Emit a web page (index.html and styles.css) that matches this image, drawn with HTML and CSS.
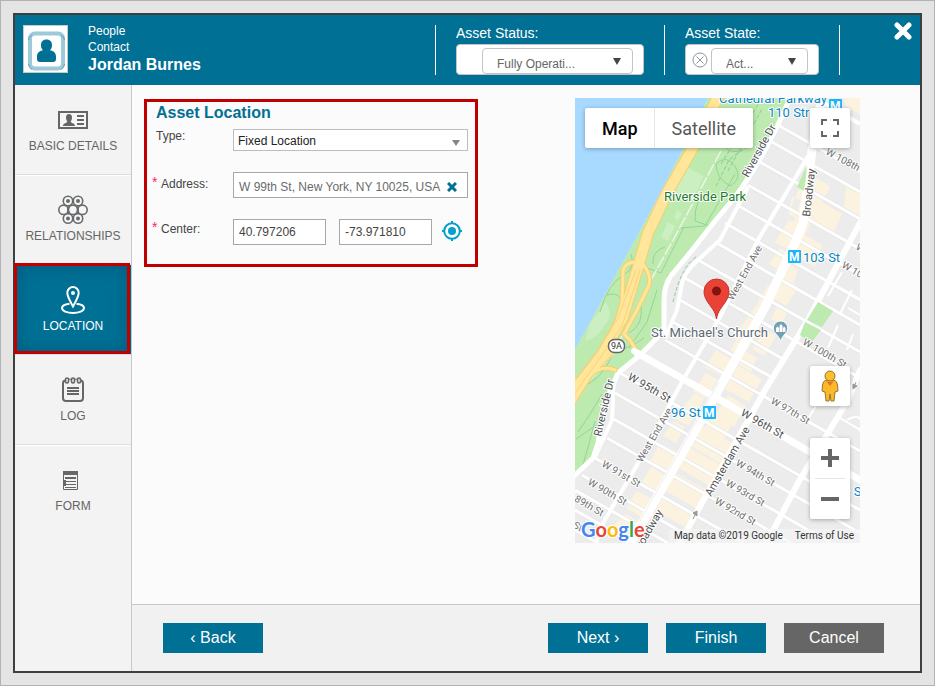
FILE: index.html
```html
<!DOCTYPE html>
<html lang="en">
<head>
<meta charset="utf-8">
<title>Asset Location</title>
<link rel="stylesheet" href="styles.css">
</head>
<body>
<div class="dialog">
  <header class="header">
    <div class="avatar">
      <svg viewBox="0 0 43 46" width="43" height="46" aria-hidden="true">
        <rect x="6" y="7.500" width="33" height="35" rx="5" fill="#fff" stroke="#9dc9d8" stroke-width="4"/>
        <path d="M8 9.500Q5 10 4.500 14M37 9.500Q40 10 40.500 14M8 43.500Q5 42 4.500 38M37 43.500Q40 42 40.500 38" fill="none" stroke="#5fa5bc" stroke-width="1"/>
        <path d="M22.500 13.500c3.800 0 5.700 2.600 5.500 6-.1 2-.9 3.600-2 4.800 3.500.8 6 2.500 6 6.200V33q0 3-3 3H16q-3 0-3-3v-2.500c0-3.700 2.500-5.400 6-6.200-1.200-1.200-2-2.800-2-4.800-.2-3.400 1.700-6 5.500-6z" fill="#007095"/>
      </svg>
    </div>
    <div class="identity">
      <span>People</span>
      <span>Contact</span>
      <h1>Jordan Burnes</h1>
    </div>
    <div class="status-group status">
      <label for="status">Asset Status:</label>
      <div class="status-box">
        <select id="status"><option>Fully Operati...</option></select>
        <svg class="caret" viewBox="0 0 8 7" width="8" height="7" aria-hidden="true"><path d="M0 0h8L4 7z" fill="#444"/></svg>
      </div>
    </div>
    <div class="status-group state">
      <label for="state">Asset State:</label>
      <div class="status-box">
        <svg viewBox="0 0 16 16" width="16" height="16" aria-hidden="true"><path d="M4.500 4.500l7 7m0-7l-7 7" stroke="#8997a2" fill="none"/><circle cx="8" cy="8" r="7" stroke="#8997a2" fill="none"/></svg>
        <select id="state"><option>Act...</option></select>
        <svg class="caret" viewBox="0 0 8 7" width="8" height="7" aria-hidden="true"><path d="M0 0h8L4 7z" fill="#444"/></svg>
      </div>
    </div>
    <div class="close-area">
      <button class="close" type="button" aria-label="Close">
        <svg viewBox="0 0 18 18" width="18" height="18"><path d="M3 3l12 12M15 3L3 15" stroke="#fff" stroke-width="5" stroke-linecap="round"/></svg>
      </button>
    </div>
  </header>

  <div class="body">
    <nav class="sidebar">
      <a href="#basic">
        <svg viewBox="0 0 30 30" width="30" height="30" aria-hidden="true"><path d="M1 7h28v16H1z" fill="#f6f6f6" stroke="#666" stroke-width="2"/><path d="M19 11h7m-7 4h7m-7 4h7" stroke="#666" stroke-width="2"/><path d="M11 9c2 0 3 1.200 3 3.500 0 2-.6 3-1.300 4 .2 1.800 4.300 1.500 4.300 4.500H5c0-3 4.100-2.700 4.300-4.500C8.600 15.500 8 14.500 8 12.500 8 10.200 9 9 11 9z" fill="#666"/></svg>
        <span>BASIC DETAILS</span>
      </a>
      <a href="#relationships">
        <svg viewBox="0 0 30 30" width="30" height="30" aria-hidden="true"><g fill="#f6f6f6" stroke="#666b6b" stroke-width="1.600"><circle cx="10" cy="6" r="4.700"/><circle cx="20" cy="6" r="4.700"/><circle cx="10" cy="23.500" r="4.700"/><circle cx="20" cy="23.500" r="4.700"/><circle cx="5.500" cy="14.800" r="4.700"/><circle cx="24.500" cy="14.800" r="4.700"/><circle cx="15" cy="14.800" r="4.700"/></g><path d="M11 11.500l-1 3.300 1 3.400M19 11.500l1 3.300-1 3.400" fill="none" stroke="#666b6b" stroke-width="2"/><g fill="#666b6b"><circle cx="10" cy="6" r="2"/><circle cx="20" cy="6" r="2"/><circle cx="10" cy="23.500" r="2"/><circle cx="20" cy="23.500" r="2"/></g></svg>
        <span>RELATIONSHIPS</span>
      </a>
      <a href="#location" class="active" aria-current="page">
        <svg viewBox="0 0 30 30" width="30" height="30" aria-hidden="true"><g fill="none" stroke="#fff" stroke-width="2"><path d="M15 21.500C12 16 9.300 11.500 9.300 7.800a5.700 5.700 0 0 1 11.400 0C20.700 11.500 18 16 15 21.500z"/><path d="M11.500 18.700C7 19.200 4 20.700 4 23c0 3 5 5 11 5s11-2 11-5c0-2.300-3-3.800-7.500-4.300"/></g><circle cx="15" cy="8" r="2" fill="#fff"/></svg>
        <span>LOCATION</span>
      </a>
      <a href="#log">
        <svg viewBox="0 0 30 30" width="30" height="30" aria-hidden="true"><path d="M7 5.500q-2 .5-2 3V23q0 3 3 3h14q3 0 3-3V8.500q0-2.500-2-3" fill="none" stroke="#666" stroke-width="2"/><g fill="#f3f3f3" stroke="#666" stroke-width="1.600"><rect x="7.500" y="3" width="3" height="5" rx="1.500"/><rect x="13.500" y="3" width="3" height="5" rx="1.500"/><rect x="19.500" y="3" width="3" height="5" rx="1.500"/></g><path d="M10.500 5q1.500-2.500 3 0m3 0q1.500-2.500 3 0" fill="none" stroke="#666"/><path d="M9 13h12M9 16h12M9 19h12" stroke="#666" stroke-width="2"/></svg>
        <span>LOG</span>
      </a>
      <a href="#form">
        <svg viewBox="0 0 30 30" width="30" height="30" aria-hidden="true"><path d="M5.500 6.500h14v18h-14z" fill="#f3f3f3" stroke="#666"/><path d="M5 6h15v4H5zM5 15h3v6H5z" fill="#666"/><path d="M7 13h11" stroke="#666" stroke-width="2"/><path d="M7 16.500h11M7 19.500h11M7 22.500h11" stroke="#666"/></svg>
        <span>FORM</span>
      </a>
    </nav>

    <div class="main">
      <main class="content">
        <form class="panel">
          <h2>Asset Location</h2>
          <div class="row row-type">
            <label for="type">Type:</label>
            <div class="field select-field">
              <select id="type"><option>Fixed Location</option></select>
              <svg class="caret" viewBox="0 0 8 6" width="8" height="6" aria-hidden="true"><path d="M0 0h8L4 6z" fill="#858585"/></svg>
            </div>
          </div>
          <div class="row">
            <label for="address"><span class="star">*</span>Address:</label>
            <div class="field address-field">
              <input id="address" type="text" value="W 99th St, New York, NY 10025, USA">
              <button class="clear" type="button" aria-label="Clear address"><svg viewBox="0 0 10 10" width="10" height="10"><path d="M1 1l8 8M9 1L1 9" stroke="#007095" stroke-width="3"/></svg></button>
            </div>
          </div>
          <div class="row row-center">
            <label for="lat"><span class="star">*</span>Center:</label>
            <div class="field coords">
              <input id="lat" type="text" value="40.797206">
              <input id="lng" type="text" value="-73.971810" aria-label="Longitude">
              <button class="locate" type="button" aria-label="Locate"><svg viewBox="0 0 20 20" width="20" height="20"><circle cx="10" cy="10" r="7.800" fill="#fff" stroke="#05a0cb" stroke-width="2"/><circle cx="10" cy="10" r="4" fill="#05a0cb"/><path d="M10 0v3M10 17v3M0 10h3M17 10h3" stroke="#05a0cb" stroke-width="2"/></svg></button>
            </div>
          </div>
        </form>

        <section class="map" aria-label="Map">
          <svg class="map-canvas" viewBox="575 98 285 445" preserveAspectRatio="xMidYMid slice">
            <rect x="575" y="98" width="285" height="445" fill="#ececec"/>
            <!-- commercial blocks -->
            <g fill="#fbf2e0">
              <path d="M844 98h16v16l-14-7zM816 178l14 8-8 16 20 12-8 18-22-12-8 18-13-8 8-24 6-20zM800 187l-9 20 14 8v-26zM846 186l14 8v22l-16-9zM792 196l14 8-4 18-14-8zM789 220l14 7-12 24-16-9zM803 234l20 11-8 22-24-13zM780 248l14 8-9 18-16-10zM788 263l10 6-5 16-14-8zM786 280l12 6-11 20-17-9zM768 285l8 5-8 16-10-6zM760 300l11 5-22 42-16-9zM778 305l10 6-7 14-10-6zM744 327l13 8-14 22-13-7zM764 329l12 7-12 20-12-7zM716 350l15 9-10 17-16-9zM744 350l13 8-6 14-12-7zM706 373l12 7-12 18-13-7zM738 366l24 13-13 23-24-13zM728 395l18 11-12 21-19-11zM695 393l9 6-15 27-15-8zM713 410l20 12-11 21-19-11zM674 421l11 6-9 16-13-7zM700 425l36 20-11 21-38-22zM660 443l18 9-11 19-17-9zM690 448l31 17-11 21-33-19zM651 467l16 9-10 18-17-9zM676 473l30 17-10 18-32-18zM637 491l18 10-10 18-19-11zM663 497l30 17-8 13-30-16zM625 514l17 9-8 16-22-12z"/>
            </g>
            <!-- river and park -->
            <path d="M575 98h133Q690 138 680 155L650 213Q632 246 618 271L590 323 575 350z" fill="#a8d9ff"/>
            <path d="M708 98h79Q765 155 735 194L715 221 693 247 670 276Q663 287 663 300V329L640 353 617 373Q606 398 601 435L594 453 575 475V350L590 323 618 271 650 213 680 155Q698 119 708 98z" fill="#bdeaae"/>
            <path d="M684 166l20 10-12 26-22-11zM668 222l7 4-7 15-7-4zM677 210l5 3-4 8-4-3zM590 324l16-22q8 15-2 24-6 12-19 15z" fill="#ccefc2"/>
            <g fill="none" stroke="#98d398" stroke-width="1">
              <path d="M716 164q10-10 19 2 8 13-5 20-14-8-14-22zM710 190q-16 8-15 31l15 5M735 174l-30 52-25 2M743 150q-13 5-20-5M684 227l-23 46-19-7M665 247q-13 4-12 17M631 254q5 14-7 21-16 8-24 37M606 295q20-5 13 18M657 290l-10 32-18 26M641 305q3 20-12 28"/>
              <path d="M578 432q16-23 24-38M576 439l22-15M583 465q7-25 12-44M644 338q-18 12-29 13M612 356q-12 26-30 30"/>
            </g>
            <g fill="none" stroke="#8cca9b" stroke-width="1" stroke-dasharray="4 2"><path d="M721 164l38-61M728 171l34-62M716 186l13-26 17-13M696 257q-15 10-23 45M667 275l6 3"/></g>
            <path d="M721 151l-50 93-29 52-29 58-38 42" fill="none" stroke="#edf5e7" stroke-width="1.500" stroke-dasharray="13 2"/>
            <!-- avenues and cross streets -->
            <g fill="none" stroke="#e2e2e2" stroke-width="4">
              <path d="M778 125l82 47M772 142l88 50M760 162l100 57M748 185l112 64M737 205l123 70M725 223l135 77M715 242l145 83M698 260l162 92M685 278l175 100M680 300l103 59M673 322l100 56M665 340l195 111M618 372l242 138M615 393l245 140M612 418l219 125M607 438l184 105M595 458l149 85M582 475l119 68M575 490l93 53M575 510l58 33M575 530l23 13"/>
            </g>
            <g fill="none" stroke="#fff" stroke-width="3" stroke-linejoin="round">
              <path d="M778 125l82 47M772 142l88 50M760 162l100 57M748 185l112 64M737 205l123 70M725 223l135 77M715 242l145 83M698 260l162 92M685 278l175 100M680 300l103 59M673 322l100 56M665 340l195 111M618 372l242 138M615 393l245 140M612 418l219 125M607 438l184 105M595 458l149 85M582 475l119 68M575 490l93 53M575 510l58 33M575 530l23 13"/>
              <path d="M815 98l45 26M810 153L782 200 758 240 720 317 683 380 640 460 603 523 596 543" stroke-width="4"/>
              <path d="M748 187L720 240 698 260Q682 274 681 289L677 310 665 338M618 372Q612 385 613 400L612 420 595 457" stroke-width="4"/>
            </g>
            <g fill="none" stroke="#fff" stroke-linecap="round" stroke-linejoin="round">
              <path d="M637 353L717 398 810 452 860 480" stroke-width="7"/>
              <path d="M790 98Q765 157 735 197L715 221 693 249 670 277Q664 287 664 300V331L640 355 618 373 604 405 598 443 593 458 573 477" stroke-width="5"/>
              <path d="M822 98L812 150 803 223 795 243 765 307 720 387 680 457 640 527 629 546" stroke-width="9"/>
              <path d="M860 223L840 260 808 320 765 390 713 483 687 530 679 543M860 370L848 400 828 433 798 483 775 527 766 543" stroke-width="6"/>
            </g>
            <path d="M719 382l-79 139" stroke="#eeeeee" stroke-width="1"/>
            <path d="M830 282l30 17M842 272l-14 24M852 290l-12 24M838 325l-10 23M848 308l12 7M853 334l-6 16M808 419l12-20M840 418l20 12M847 420q18-10 13 12" fill="none" stroke="#fff" stroke-width="2"/>
            <path d="M807 165l-10 22 7 4 2-14zM818 302l15 9-11 16-15-7zM805 322l16 8-10 13-11-8z" fill="#bdeaae"/>
            <!-- parkway -->
            <g fill="none" stroke-linecap="round" stroke-linejoin="round">
              <g stroke="#f5cf6e">
                <path d="M720 93L690 153 667 193 648 233 638 267 623 317 603 353 573 392" stroke-width="12"/>
                <path d="M635 262Q622 263 623 275L622 303 612 338M641 262Q652 274 649 285L637 310 624 334 630 340 637 352M622 325L580 382M612 352L590 376 573 403M615 370Q603 365 590 374L573 381" stroke-width="5"/>
              </g>
              <g stroke="#ffe69a">
                <path d="M720 93L690 153 667 193 648 233 638 267 623 317 603 353 573 392" stroke-width="10"/>
                <path d="M635 262Q622 263 623 275L622 303 612 338M641 262Q652 274 649 285L637 310 624 334 630 340 637 352M622 325L580 382M612 352L590 376 573 403M615 370Q603 365 590 374L573 381" stroke-width="3"/>
              </g>
              <path d="M636 270L618 318 596 354 574 382M640 270L622 326 600 358 575 393" stroke="#f7d478"/>
            </g>
            <path d="M634 351l4 2" stroke="#fff" stroke-width="6" stroke-linecap="round"/>
            <!-- highway shield -->
            <rect x="608.500" y="339.500" width="16" height="13" rx="6" fill="#fff" stroke="#666" stroke-width="1.500"/>
            <text class="t9" x="611" y="349">9A</text>
            <!-- street names -->
            <g class="road major">
              <text transform="translate(748 178) rotate(-61)">Riverside Dr</text>
              <text transform="translate(810 217) rotate(-84)">Broadway</text>
              <text transform="translate(601 437) rotate(-77)">Riverside Dr</text>
              <text transform="translate(711 497) rotate(-60)">Amsterdam Ave</text>
              <text transform="translate(639 554) rotate(-60)">Broadway</text>
              <text transform="translate(627 379) rotate(30)">W 95th St</text>
              <text transform="translate(740 415) rotate(30)">W 96th St</text>
            </g>
            <g class="road">
              <text transform="translate(733 301) rotate(-61)">West End Ave</text>
              <text transform="translate(642 463) rotate(-60)">West End Ave</text>
              <text transform="translate(825 154) rotate(28)">W 108th St</text>
              <text transform="translate(841 267) rotate(30)">W 104th St</text>
              <text transform="translate(855 249) rotate(30)">W 105th St</text>
              <text transform="translate(802 344) rotate(30)">W 100th St</text>
              <text transform="translate(770 403) rotate(30)">W 97th St</text>
              <text transform="translate(735 465) rotate(30)">W 94th St</text>
              <text transform="translate(725 485) rotate(30)">W 93rd St</text>
              <text transform="translate(714 503) rotate(30)">W 92nd St</text>
              <text transform="translate(601 466) rotate(30)">W 91st St</text>
              <text transform="translate(587 484) rotate(30)">W 90th St</text>
              <text transform="translate(564 495) rotate(30)">W 89th St</text>
              <text transform="translate(543 510) rotate(30)">W 88th St</text>
            </g>
            <path d="M693 519l3-6M693 513l4-2v5zM856 382l-2 5M853 384v5l4-3z" fill="#999" stroke="#999"/>
            <!-- places -->
            <g class="place">
              <text class="transit" x="719" y="103">Cathedral Parkway</text>
              <text class="transit" x="768" y="117">110 Street</text>
              <text class="transit" x="803" y="262">103 St</text>
              <text class="transit" x="671" y="417">96 St</text>
              <text class="transit" x="836" y="496">96 St</text>
              <text class="park" x="664" y="201">Riverside Park</text>
              <text class="poi" x="651" y="337">St. Michael's Church</text>
            </g>
            <g fill="#1ab6f9"><rect x="788" y="250" width="13" height="13" rx="1"/><rect x="703" y="406" width="13" height="13" rx="1"/><rect x="829" y="99" width="13" height="13" rx="1"/></g>
            <g class="metro"><text x="789" y="261">M</text><text x="704" y="417">M</text><text x="830" y="110">M</text></g>
            <path d="M780.500 341q-1.500-4-4.500-7a7.300 7.300 0 1 1 9 0q-3 3-4.500 7z" fill="#77a0b4" stroke="#fff"/>
            <path d="M776 332v-4l1.500-1.500L779 328v4zM779.500 332v-6l1.500-2 1.500 2v6zM783 332v-4l1-1.500 1.500 1.500v4z" fill="#fff"/>
            <path d="M716.500 319c-1-8-5-11-8.500-16.500-2-3-4-6.500-4-11a12.500 12.500 0 0 1 25 0c0 4.500-2 8-4 11-3.500 5.500-7.500 8.500-8.500 16.500z" fill="#ea4335" stroke="#c5332b"/>
            <circle cx="716.500" cy="291" r="4.500" fill="#811411"/>
          </svg>
          <div class="map-type">
            <button type="button" class="selected">Map</button>
            <button type="button">Satellite</button>
          </div>
          <button class="map-button fullscreen" type="button" aria-label="Toggle fullscreen"><svg viewBox="0 0 18 18" width="18" height="18"><path d="M1 6V1H6M12 1h5V6M17 12v5H12M6 17H1V12" fill="none" stroke="#666" stroke-width="2"/></svg></button>
          <button class="map-button pegman" type="button" aria-label="Street View"><svg viewBox="0 0 20 32" width="20" height="32"><path d="M6 10h8q3 1 3.500 5l.5 6-3 1-1 9h-3l-1-7-1 7H6l-1-9-3-1 .5-6Q3 11 6 10z" fill="#fbb829" stroke="#96762d"/><circle cx="10" cy="6" r="5" fill="#fbc02d" stroke="#96762d"/><path d="M6 11q4 2 8 0l-4 5z" fill="#e57330"/></svg></button>
          <div class="zoom">
            <button type="button" aria-label="Zoom in"><svg viewBox="0 0 18 18" width="18" height="18"><path d="M0 9h18M9 0v18" stroke="#666" stroke-width="4"/></svg></button>
            <button type="button" aria-label="Zoom out"><svg viewBox="0 0 18 18" width="18" height="18"><path d="M0 9h18" stroke="#666" stroke-width="4"/></svg></button>
          </div>
          <div class="logo"><span class="b">G</span><span class="r">o</span><span class="y">o</span><span class="b">g</span><span class="g">l</span><span class="r">e</span></div>
          <div class="attribution"><span>Map data ©2019 Google</span><a href="#terms">Terms of Use</a></div>
        </section>
      </main>
      <footer class="footer">
        <button type="button" class="back">‹ Back</button>
        <button type="button">Next ›</button>
        <button type="button">Finish</button>
        <button type="button" class="cancel">Cancel</button>
      </footer>
    </div>
  </div>
</div>
</body>
</html>
```
FILE: styles.css
```css
* {
  box-sizing: border-box;
}

body {
  margin: 0;
  min-height: 100vh;
  padding: 12px;
  display: flex;
  border: 1px solid #b2b2b2;
  background: #e4e4e4;
  font-family: "Liberation Sans", Arial, sans-serif;
  font-size: 12px;
  color: #444;
}

button,
input,
select {
  font: inherit;
  color: inherit;
  margin: 0;
}

button {
  border: 0;
  padding: 0;
  background: none;
  cursor: pointer;
}

svg {
  display: block;
}

h1,
h2 {
  margin: 0;
  font-size: 16px;
}

.dialog {
  flex: 1;
  display: flex;
  flex-direction: column;
  border: 2px solid #3f3f3f;
  background: #fbfbfb;
}

/* Header */
.header {
  display: flex;
  height: 70px;
  padding: 10px 0 10px 8px;
  background: #007095;
  color: #fff;
}

.avatar {
  width: 45px;
  height: 48px;
  border: 1px solid #c9c9c9;
  background: #fff;
}

.identity {
  flex: 1;
  display: flex;
  flex-direction: column;
  padding-left: 20px;
  margin-top: -2px;
  line-height: 16px;
}

.identity h1 {
  line-height: 20px;
}

.status-group {
  border-left: 1px solid #fff;
  padding-left: 20px;
}

.status {
  width: 229px;
}

.state {
  width: 175px;
}

.status-group label {
  display: block;
  font-size: 14px;
  line-height: 16px;
  margin-bottom: 3px;
}

.status-box {
  position: relative;
  display: flex;
  align-items: center;
  height: 31px;
  border: 1px solid #c4c4c4;
  border-radius: 4px;
  background: #fff;
}

.status .status-box {
  width: 188px;
  padding-left: 25px;
}

.state .status-box {
  width: 134px;
  padding-left: 6px;
  gap: 3px;
}

.status-box select {
  appearance: none;
  height: 26px;
  margin-top: 2px;
  padding: 7px 14px 0;
  border: 1px solid #c4c4c4;
  border-radius: 4px;
  background: #fff;
  color: #666;
}

.status select {
  width: 151px;
}

.state select {
  width: 97px;
}

.status-box .caret {
  position: absolute;
  right: 22px;
  top: 13px;
}

.close-area {
  width: 81px;
  border-left: 1px solid #fff;
}

.close {
  display: block;
  margin: -3px 8px 0 auto;
}

/* Sidebar */
.body {
  flex: 1;
  display: flex;
}

.sidebar {
  width: 117px;
  border-right: 1px solid #c8c8c8;
  background: #f3f3f3;
}

.sidebar a {
  position: relative;
  display: flex;
  flex-direction: column;
  align-items: center;
  gap: 3px;
  height: 90px;
  padding-top: 20px;
  border-bottom: 1px solid #dcdcdc;
  box-shadow: 0 1px #fff;
  color: #666;
  line-height: 16px;
  text-decoration: none;
}

.sidebar a:last-child {
  border: 0;
  box-shadow: none;
}

.sidebar .active {
  background: #007095;
  color: #fff;
  box-shadow: inset 0 0 20px #00587a;
}

.sidebar .active::after {
  content: "";
  position: absolute;
  inset: -2px 1px 0 -1px;
  border: 3px solid #c00000;
}

/* Content */
.main {
  flex: 1;
  display: flex;
  flex-direction: column;
}

.content {
  flex: 1;
  display: flex;
  justify-content: space-between;
  align-items: flex-start;
  padding: 13px 60px 13px 12px;
}

.panel {
  width: 334px;
  margin-top: 1px;
  padding: 1px 7px 19px 5px;
  border: 3px solid #c00000;
}

.panel h2 {
  padding-left: 4px;
  line-height: 20px;
  color: #007095;
}

.row {
  display: flex;
  margin-top: 21px;
}

.row-type {
  margin-top: 6px;
}

.row label {
  display: flex;
  width: 81px;
  margin-top: 4px;
  line-height: 16px;
}

.row-type label {
  margin-top: -1px;
  padding-left: 4px;
}

.row-center label {
  margin-top: 2px;
}

.star {
  width: 9px;
  margin-top: -2px;
  font-size: 14px;
  color: #ff2663;
}

.field {
  position: relative;
  flex: 1;
}

.field select,
.field input {
  display: block;
  width: 100%;
  height: 26px;
  border: 1px solid #a8a8a8;
  border-radius: 0;
  background: #fff;
  padding: 0 5px;
}

.field select {
  appearance: none;
  height: 22px;
  padding: 2px 4px 0;
  border-color: #bdbdbd;
  color: #222;
}

.field .caret {
  position: absolute;
  right: 8px;
  top: 11px;
}

.field.address-field input {
  padding-top: 3px;
  color: #6b6b6b;
}

.clear {
  position: absolute;
  right: 11px;
  top: 10px;
}

.coords {
  display: flex;
  align-items: center;
}

.field.coords input {
  width: 93px;
  margin-right: 13px;
}

.field.coords input + input {
  margin-right: 10px;
}

.locate {
  margin-bottom: 2px;
}

/* Map */
.map {
  position: relative;
  width: 285px;
  height: 445px;
  overflow: hidden;
  font-family: Roboto, sans-serif;
}

.map-canvas {
  width: 100%;
  height: 100%;
}

.map-canvas text {
  paint-order: stroke;
  stroke: #fff;
  stroke-width: 2px;
  stroke-linejoin: round;
  fill: #707070;
  font-size: 10px;
}

.map-canvas .major text {
  font-size: 11px;
  fill: #505050;
}

.map-canvas .place text {
  font-size: 13px;
}

.map-canvas .place .transit {
  fill: #0a86c4;
}

.map-canvas .place .park {
  fill: #1b7d2b;
}

.map-canvas .place .poi {
  fill: #5c6b75;
}

.map-canvas .metro text {
  fill: #fff;
  stroke: none;
  font-size: 12px;
  font-weight: 700;
}

.map-canvas .t9 {
  font-size: 9px;
  fill: #333;
}

.map-type,
.map-button,
.zoom {
  position: absolute;
  border-radius: 2px;
  background: #fff;
  box-shadow: 0 1px 4px rgba(0, 0, 0, 0.3);
}

.map-type {
  left: 10px;
  top: 10px;
  display: flex;
  height: 40px;
  font-size: 18px;
  color: #565656;
}

.map-type button {
  padding: 0 17px;
}

.map-type .selected {
  padding-right: 16px;
  border-right: 1px solid #e6e6e6;
  font-weight: 500;
  color: #000;
}

.map-button {
  right: 10px;
  display: grid;
  place-items: center;
  width: 40px;
  height: 40px;
}

.fullscreen {
  top: 10px;
}

.pegman {
  bottom: 137px;
}

.zoom {
  right: 10px;
  bottom: 24px;
  width: 40px;
  padding: 0 5px;
}

.zoom button {
  display: grid;
  place-items: center;
  width: 100%;
  height: 40px;
}

.zoom button + button {
  height: 41px;
  border-top: 1px solid #e6e6e6;
}

.logo {
  position: absolute;
  left: 6px;
  bottom: 1px;
  font-family: Lato, sans-serif;
  font-size: 20px;
  font-weight: 700;
  line-height: 26px;
  -webkit-text-stroke: 2px #fff;
  paint-order: stroke;
}

.b {
  color: #4285f4;
}

.r {
  color: #ea4335;
}

.y {
  color: #fbbc05;
}

.g {
  color: #34a853;
}

.attribution {
  position: absolute;
  right: 0;
  bottom: 0;
  display: flex;
  gap: 12px;
  padding: 0 6px 0 5px;
  background: rgba(245, 245, 245, 0.7);
  font-size: 10px;
  line-height: 14px;
  color: #333;
}

.attribution a {
  color: inherit;
  text-decoration: none;
}

/* Footer */
.footer {
  display: flex;
  gap: 18px;
  height: 67px;
  padding: 18px 36px 0 31px;
  border-top: 1px solid #c8c8c8;
  background: #f1f1f1;
}

.footer button {
  width: 100px;
  height: 30px;
  background: #007095;
  color: #fff;
  font-size: 16px;
}

.footer .back {
  margin-right: auto;
}

.footer .cancel {
  background: #666;
}
```
